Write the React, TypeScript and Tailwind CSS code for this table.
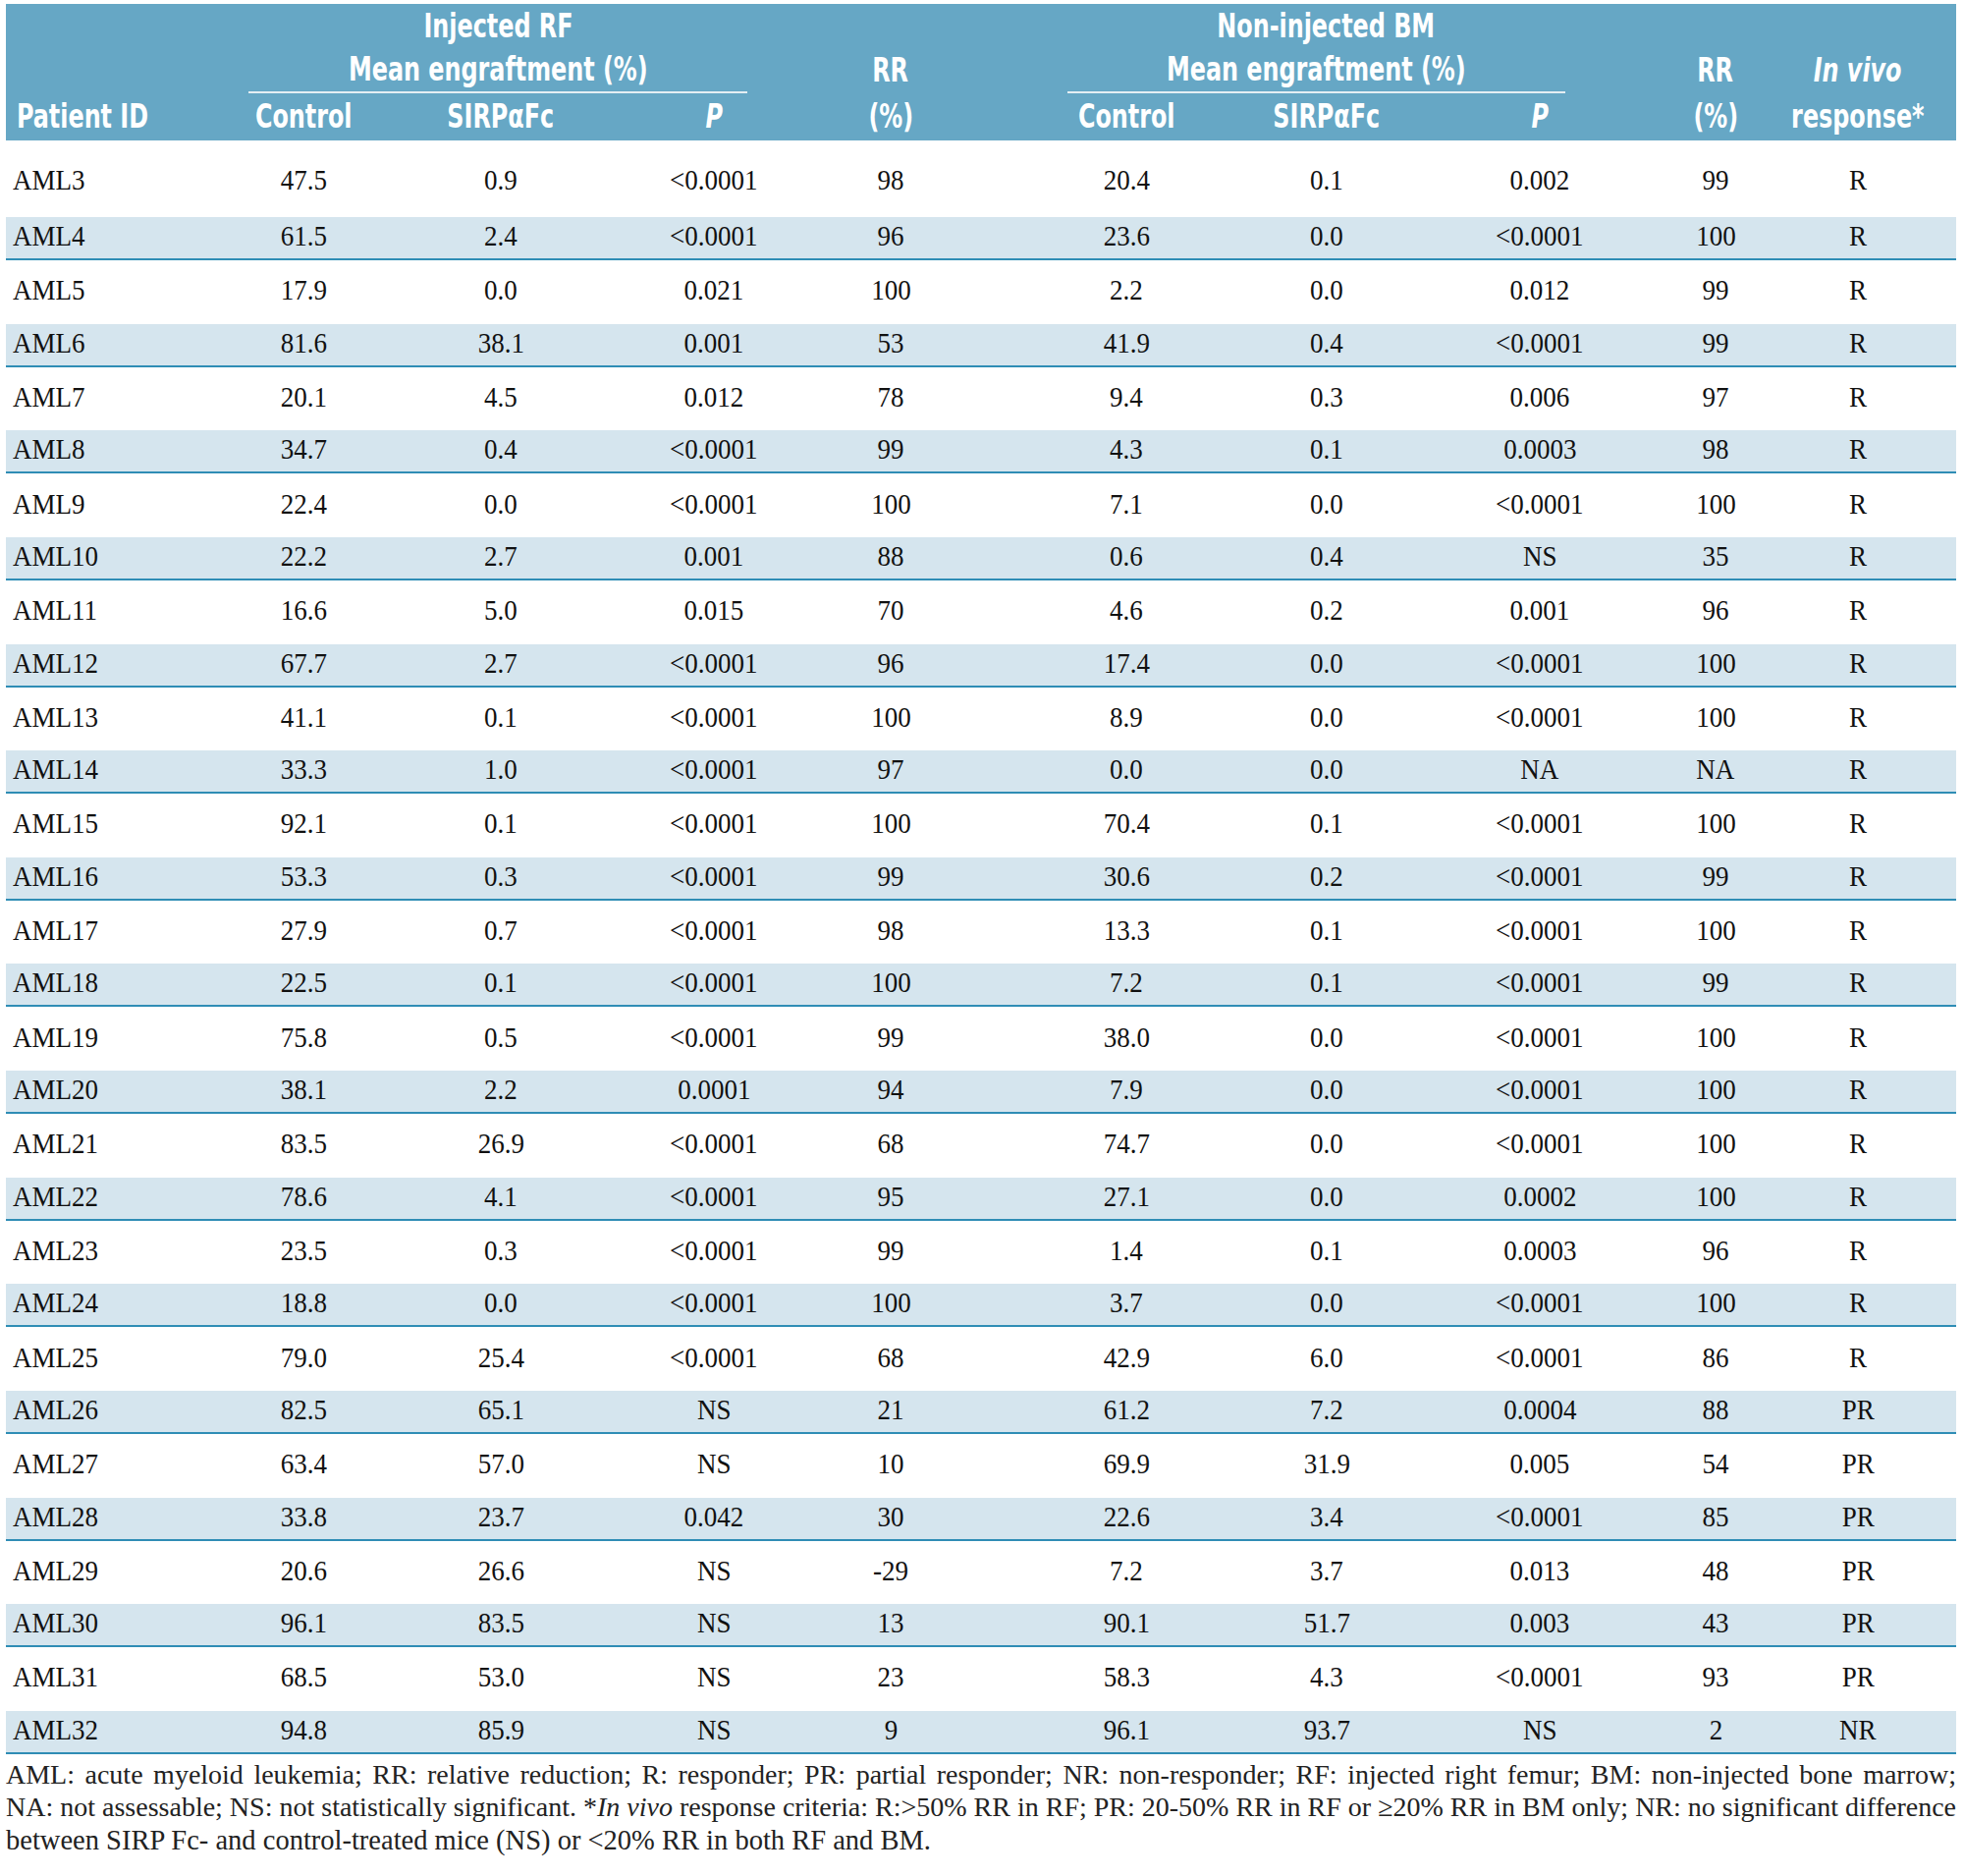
const rows: string[][] = [
  ["AML3", "47.5", "0.9", "<0.0001", "98", "20.4", "0.1", "0.002", "99", "R"],
  ["AML4", "61.5", "2.4", "<0.0001", "96", "23.6", "0.0", "<0.0001", "100", "R"],
  ["AML5", "17.9", "0.0", "0.021", "100", "2.2", "0.0", "0.012", "99", "R"],
  ["AML6", "81.6", "38.1", "0.001", "53", "41.9", "0.4", "<0.0001", "99", "R"],
  ["AML7", "20.1", "4.5", "0.012", "78", "9.4", "0.3", "0.006", "97", "R"],
  ["AML8", "34.7", "0.4", "<0.0001", "99", "4.3", "0.1", "0.0003", "98", "R"],
  ["AML9", "22.4", "0.0", "<0.0001", "100", "7.1", "0.0", "<0.0001", "100", "R"],
  ["AML10", "22.2", "2.7", "0.001", "88", "0.6", "0.4", "NS", "35", "R"],
  ["AML11", "16.6", "5.0", "0.015", "70", "4.6", "0.2", "0.001", "96", "R"],
  ["AML12", "67.7", "2.7", "<0.0001", "96", "17.4", "0.0", "<0.0001", "100", "R"],
  ["AML13", "41.1", "0.1", "<0.0001", "100", "8.9", "0.0", "<0.0001", "100", "R"],
  ["AML14", "33.3", "1.0", "<0.0001", "97", "0.0", "0.0", "NA", "NA", "R"],
  ["AML15", "92.1", "0.1", "<0.0001", "100", "70.4", "0.1", "<0.0001", "100", "R"],
  ["AML16", "53.3", "0.3", "<0.0001", "99", "30.6", "0.2", "<0.0001", "99", "R"],
  ["AML17", "27.9", "0.7", "<0.0001", "98", "13.3", "0.1", "<0.0001", "100", "R"],
  ["AML18", "22.5", "0.1", "<0.0001", "100", "7.2", "0.1", "<0.0001", "99", "R"],
  ["AML19", "75.8", "0.5", "<0.0001", "99", "38.0", "0.0", "<0.0001", "100", "R"],
  ["AML20", "38.1", "2.2", "0.0001", "94", "7.9", "0.0", "<0.0001", "100", "R"],
  ["AML21", "83.5", "26.9", "<0.0001", "68", "74.7", "0.0", "<0.0001", "100", "R"],
  ["AML22", "78.6", "4.1", "<0.0001", "95", "27.1", "0.0", "0.0002", "100", "R"],
  ["AML23", "23.5", "0.3", "<0.0001", "99", "1.4", "0.1", "0.0003", "96", "R"],
  ["AML24", "18.8", "0.0", "<0.0001", "100", "3.7", "0.0", "<0.0001", "100", "R"],
  ["AML25", "79.0", "25.4", "<0.0001", "68", "42.9", "6.0", "<0.0001", "86", "R"],
  ["AML26", "82.5", "65.1", "NS", "21", "61.2", "7.2", "0.0004", "88", "PR"],
  ["AML27", "63.4", "57.0", "NS", "10", "69.9", "31.9", "0.005", "54", "PR"],
  ["AML28", "33.8", "23.7", "0.042", "30", "22.6", "3.4", "<0.0001", "85", "PR"],
  ["AML29", "20.6", "26.6", "NS", "-29", "7.2", "3.7", "0.013", "48", "PR"],
  ["AML30", "96.1", "83.5", "NS", "13", "90.1", "51.7", "0.003", "43", "PR"],
  ["AML31", "68.5", "53.0", "NS", "23", "58.3", "4.3", "<0.0001", "93", "PR"],
  ["AML32", "94.8", "85.9", "NS", "9", "96.1", "93.7", "NS", "2", "NR"],
];

// column tracks chosen so the centres land where the printed table has them
const cols =
  "grid grid-cols-[260px_86px_316px_118px_242px_238px_170px_264px_94px_196px]";

const head =
  "font-['Liberation_Sans_Narrow','Arial_Narrow','DejaVu_Sans_Condensed',sans-serif] font-bold font-stretch-condensed text-[34px] leading-none text-white";

// no narrow face is installed, so squeeze the condensed one a bit more
function H({ children, left }: { children: React.ReactNode; left?: boolean }) {
  return (
    <span
      className={`inline-block whitespace-nowrap scale-x-[0.78] ${
        left ? "origin-left" : "origin-center"
      }`}
    >
      {children}
    </span>
  );
}

const cell = "flex items-center justify-center pb-[3px]";

export default function App() {
  return (
    <div className="w-[2000px] h-[1910px] bg-white pt-[4px] pl-[6px] text-[#111]">
      <div className="w-[1986px]">
        {/* header */}
        <div className={`${cols} ${head} grid-rows-[44px_47px_48px] h-[139px] bg-[#66a7c5]`}>
          <div className="col-start-1 row-start-3 flex items-center pl-[11px] pb-[3px]">
            <H left>Patient ID</H>
          </div>

          <div className="col-start-2 col-span-3 row-start-1 row-span-2 -ml-[13px] mr-[25px] flex flex-col border-b-2 border-[#e4eef3]">
            <div className="h-[44px] flex items-center justify-center">
              <H>Injected RF</H>
            </div>
            <div className="flex-1 flex items-center justify-center pb-[2px]">
              <H>Mean engraftment (%)</H>
            </div>
          </div>
          <div className={`col-start-2 row-start-3 ${cell}`}><H>Control</H></div>
          <div className={`col-start-3 row-start-3 ${cell}`}><H>SIRPαFc</H></div>
          <div className={`col-start-4 row-start-3 ${cell} italic`}><H>P</H></div>
          <div className="col-start-5 row-start-2 flex items-center justify-center pb-[2px]"><H>RR</H></div>
          <div className={`col-start-5 row-start-3 ${cell}`}><H>(%)</H></div>

          <div className="col-start-6 col-span-3 row-start-1 row-span-2 ml-[59px] mr-[106px] flex flex-col border-b-2 border-[#e4eef3]">
            <div className="h-[44px] flex items-center justify-center pl-[20px]">
              <H>Non-injected BM</H>
            </div>
            <div className="flex-1 flex items-center justify-center pb-[2px]">
              <H>Mean engraftment (%)</H>
            </div>
          </div>
          <div className={`col-start-6 row-start-3 ${cell}`}><H>Control</H></div>
          <div className={`col-start-7 row-start-3 ${cell}`}><H>SIRPαFc</H></div>
          <div className={`col-start-8 row-start-3 ${cell} italic`}><H>P</H></div>
          <div className="col-start-9 row-start-2 flex items-center justify-center pb-[2px]"><H>RR</H></div>
          <div className={`col-start-9 row-start-3 ${cell}`}><H>(%)</H></div>
          <div className="col-start-10 row-start-2 flex items-center justify-center pb-[2px] italic"><H>In vivo</H></div>
          <div className={`col-start-10 row-start-3 ${cell}`}><H>response*</H></div>
        </div>

        {/* body */}
        <div className="font-['Liberation_Serif',serif] text-[30px] leading-none">
          {rows.map((r, i) => {
            const shaded = i % 2 === 1;
            const h = i === 0 ? "h-[78px]" : shaded ? "h-[44px]" : "h-[64.64px]";
            return (
              <div
                key={r[0]}
                className={`${cols} ${h} ${
                  shaded ? "bg-[#d5e5ee] border-b-2 border-[#2f8db5]" : "bg-white"
                }`}
              >
                {r.map((v, j) => (
                  <div
                    key={j}
                    className={`flex items-center pb-[4px] ${
                      j === 0 ? "pl-[7px]" : "justify-center"
                    } ${i === 0 ? "pt-[6px]" : ""}`}
                  >
                    <span
                      className={`inline-block whitespace-nowrap scale-x-[0.9] ${
                        j === 0 ? "origin-left" : "origin-center"
                      }`}
                    >
                      {v}
                    </span>
                  </div>
                ))}
              </div>
            );
          })}
        </div>

        {/* footnote */}
        <div className="mt-[4px] font-['Liberation_Serif',serif] text-[28px] leading-[33.5px] text-[#222]">
          <p className="text-justify [text-align-last:justify] [word-spacing:-3px]">
            AML: acute myeloid leukemia; RR: relative reduction; R: responder; PR: partial responder;
            NR: non-responder; RF: injected right femur; BM: non-injected bone marrow;
          </p>
          <p className="text-justify [text-align-last:justify] [word-spacing:-5px]">
            NA: not assessable; NS: not statistically significant. *<i>In vivo</i> response criteria:
            R:&gt;50% RR in RF; PR: 20-50% RR in RF or ≥20% RR in BM only; NR: no significant
            difference
          </p>
          <p className="text-[28.5px]">
            between SIRP Fc- and control-treated mice (NS) or &lt;20% RR in both RF and BM.
          </p>
        </div>
      </div>
    </div>
  );
}
